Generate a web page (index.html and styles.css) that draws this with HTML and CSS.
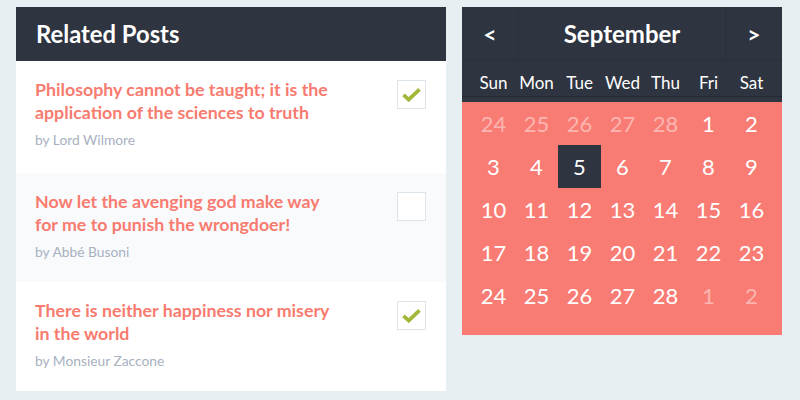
FILE: index.html
```html
<!DOCTYPE html>
<html>
<head>
<meta charset="utf-8">
<link rel="stylesheet" href="styles.css">
</head>
<body>
<div class="page">
  <section class="posts">
    <header class="posts-head">Related Posts</header>
    <div class="post">
      <div class="post-text">
        <div class="post-title">Philosophy cannot be taught; it is the application of the sciences to truth</div>
        <div class="post-author">by Lord Wilmore</div>
      </div>
      <span class="check"><svg viewBox="0 0 20 16" width="19" height="15"><path d="M1.5 8.5 L7 13.5 L18.5 2.5" fill="none" stroke="#a2b83b" stroke-width="4" stroke-linejoin="miter"/></svg></span>
    </div>
    <div class="post alt">
      <div class="post-text">
        <div class="post-title">Now let the avenging god make way for me to punish the wrongdoer!</div>
        <div class="post-author">by Abbé Busoni</div>
      </div>
      <span class="check"></span>
    </div>
    <div class="post">
      <div class="post-text">
        <div class="post-title">There is neither happiness nor misery in the world</div>
        <div class="post-author">by Monsieur Zaccone</div>
      </div>
      <span class="check"><svg viewBox="0 0 20 16" width="19" height="15"><path d="M1.5 8.5 L7 13.5 L18.5 2.5" fill="none" stroke="#a2b83b" stroke-width="4" stroke-linejoin="miter"/></svg></span>
    </div>
  </section>

  <section class="cal">
    <header class="cal-head">
      <span class="nav">&lt;</span>
      <span class="month">September</span>
      <span class="nav">&gt;</span>
    </header>
    <div class="weekdays">
      <span>Sun</span><span>Mon</span><span>Tue</span><span>Wed</span><span>Thu</span><span>Fri</span><span>Sat</span>
    </div>
    <div class="days">
      <span class="muted">24</span><span class="muted">25</span><span class="muted">26</span><span class="muted">27</span><span class="muted">28</span><span>1</span><span>2</span>
      <span>3</span><span>4</span><span class="today">5</span><span>6</span><span>7</span><span>8</span><span>9</span>
      <span>10</span><span>11</span><span>12</span><span>13</span><span>14</span><span>15</span><span>16</span>
      <span>17</span><span>18</span><span>19</span><span>20</span><span>21</span><span>22</span><span>23</span>
      <span>24</span><span>25</span><span>26</span><span>27</span><span>28</span><span class="muted">1</span><span class="muted">2</span>
    </div>
  </section>
</div>
</body>
</html>
```

FILE: styles.css
```css
* { box-sizing: border-box; }
html, body { margin: 0; padding: 0; }
body {
  background: #e8eff3;
  font-family: Lato, "Open Sans", sans-serif;
  width: 800px;
  height: 400px;
  overflow: hidden;
}
.page {
  display: flex;
  align-items: flex-start;
  gap: 16px;
  padding: 7px 16px;
}
.posts {
  width: 430px;
  background: #fff;
}
.posts-head {
  height: 54px;
  background: #2e3440;
  color: #fff;
  font-size: 23.8px;
  font-weight: 700;
  padding: 0 20px;
  display: flex;
  align-items: center;
}
.post {
  display: flex;
  justify-content: space-between;
  align-items: flex-start;
  height: 109px;
  padding: 17px 20px 0 19px;
  background: #fff;
}
.post:first-of-type { height: 112px; }
.post.alt { background: #f8fafc; }
.post-text { width: 300px; }
.post-title {
  color: #f87b70;
  font-size: 17.8px;
  font-weight: 700;
  line-height: 23px;
}
.post-author {
  color: #a7b1bf;
  font-size: 13.8px;
  line-height: 18px;
  margin-top: 7px;
}
.check {
  width: 29px;
  height: 29px;
  margin-top: 2px;
  border: 1px solid #dde4ea;
  background: #fff;
  display: flex;
  align-items: center;
  justify-content: center;
  flex: none;
}
.cal {
  width: 320px;
  background: #2e3440;
}
.cal-head {
  height: 54px;
  display: flex;
  border-bottom: 1px solid #283039;
  color: #fff;
  font-weight: 700;
}
.nav {
  width: 56px;
  display: flex;
  align-items: center;
  justify-content: center;
  font-size: 23px;
}
.month {
  flex: 1;
  display: flex;
  align-items: center;
  justify-content: center;
  font-size: 24px;
  border-left: 1px solid #283039;
  border-right: 1px solid #283039;
}
.weekdays {
  display: grid;
  grid-template-columns: repeat(7, 43px);
  padding: 7px 9px 0 10px;
  height: 36px;
  align-items: center;
  color: #fff;
  font-size: 17px;
  border-bottom: 1px solid #232832;
  margin-bottom: 5px;
}
.weekdays span { text-align: center; }
.days {
  background: #f97c74;
  display: grid;
  grid-template-columns: repeat(7, 43px);
  grid-auto-rows: 43px;
  padding: 0 9px 18px 10px;
  color: #fff;
  font-size: 22px;
}
.days span {
  display: flex;
  align-items: center;
  justify-content: center;
}
.days .muted { color: rgba(255,255,255,0.45); }
.days .today { background: #2e3440; }
```
